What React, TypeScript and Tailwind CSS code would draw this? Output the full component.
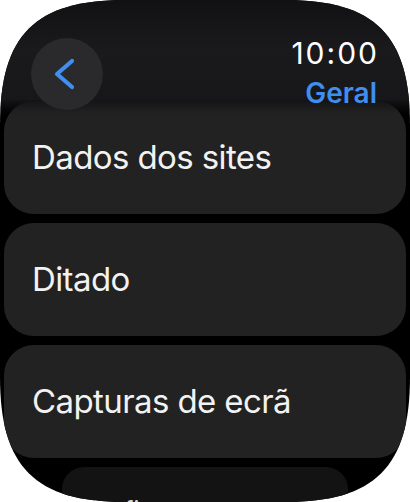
import React from 'react';

const rows = ['Dados dos sites', 'Ditado', 'Capturas de ecrã'];

const App: React.FC = () => {
  return (
    <div className="w-[410px] h-[502px] bg-white" style={{ fontFamily: 'Inter, "Noto Sans", sans-serif' }}>
      <div className="relative w-full h-full bg-black overflow-hidden [clip-path:path('M0_125C0_35_35_0_125_0L285_0C375_0_410_35_410_125L410_377C410_467_375_502_285_502L125_502C35_502_0_467_0_377Z')]">
        {/* scrolling list */}
        <div className="flex flex-col gap-[9px] pt-[101px] px-[4px]">
          {rows.map((label) => (
            <div key={label} className="h-[113px] rounded-[30px] bg-[#222222] flex items-center pl-[28px]">
              <span className="text-[33px] leading-none text-[#f2f2f2] tracking-[-0.6px]">{label}</span>
            </div>
          ))}
          <div className="mx-[58px] h-[82px] rounded-[22px] bg-[#131313] pl-[24px] pt-[31px]">
            <span className="text-[24px] leading-none text-[#d8d8d8]">Perfis</span>
          </div>
        </div>

        {/* header material over the list */}
        <div className="absolute inset-x-0 top-0 h-[100px] bg-gradient-to-b from-[#111114] via-[#1a1a1d] to-[#17171a]" />
        <div className="absolute inset-x-0 top-[100px] h-[14px] bg-gradient-to-b from-[#141416] to-transparent" />
        <div className="absolute inset-x-0 top-0 flex justify-between pl-[31px] pr-[33px] pt-[36px]">
          <div className="w-[72px] h-[72px] mt-[2px] rounded-full bg-[#2a2a2c] flex items-center justify-center">
            <svg width="72" height="72" viewBox="0 0 72 72">
              <path d="M41 23 L26 36 L41 49" fill="none" stroke="#3f8ef0" strokeWidth="4.2" strokeLinecap="round" strokeLinejoin="round" />
            </svg>
          </div>
          <div className="flex flex-col items-end">
            <span className="text-[30px] leading-[34px] text-white tracking-[2px] -mr-[2px]">10:00</span>
            <span className="mt-[6px] text-[28px] leading-[34px] font-semibold text-[#3f8ef0]">Geral</span>
          </div>
        </div>
      </div>
    </div>
  );
};

export default App;
